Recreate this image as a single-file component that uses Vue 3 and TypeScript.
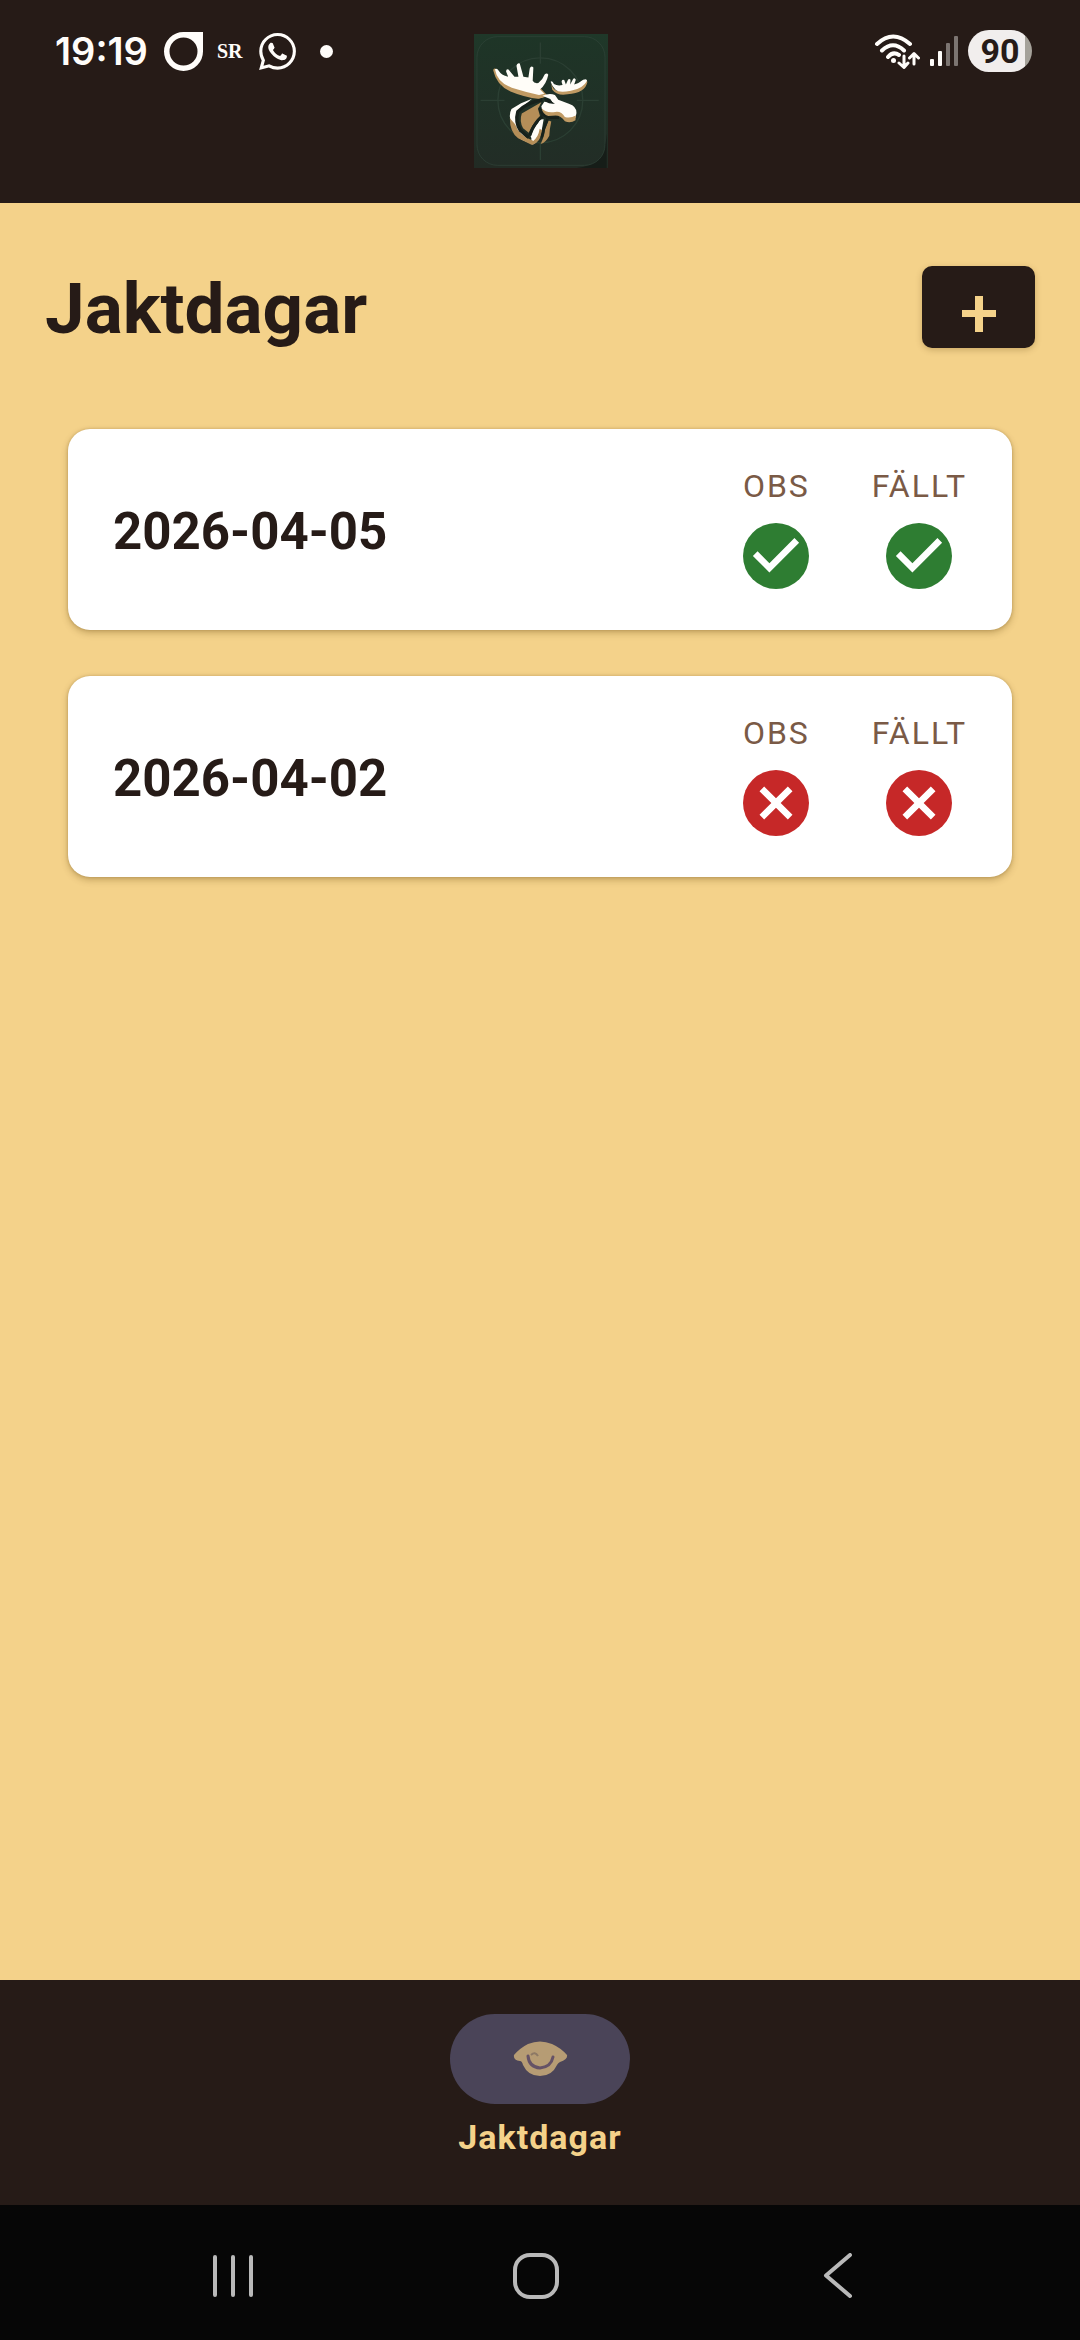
<script setup lang="ts">
interface HuntDay {
  date: string
  observed: boolean
  felled: boolean
}

const days: HuntDay[] = [
  { date: '2026-04-05', observed: true, felled: true },
  { date: '2026-04-02', observed: false, felled: false },
]

const statusesOf = (day: HuntDay) => [
  { label: 'OBS', done: day.observed },
  { label: 'FÄLLT', done: day.felled },
]
</script>

<template>
  <div class="app">
    <header class="topbar">
      <div class="status status-left">
        <span class="clock">19:19</span>
        <svg class="ic-ring" viewBox="0 0 39 39" aria-hidden="true">
          <path fill-rule="evenodd" d="M39 0V19.5A19.5 19.5 0 1 1 19.5 0ZM19.5 5.5A14 14 0 1 0 19.5 33.500A14 14 0 1 0 19.5 5.500Z" />
        </svg>
        <span class="sr">SR</span>
        <svg class="ic-chat" viewBox="0 0 24 24" aria-hidden="true">
          <path d="M17.472 14.382c-.297-.149-1.758-.867-2.030-.967-.273-.099-.471-.148-.670.150-.197.297-.767.966-.940 1.164-.173.199-.347.223-.644.075-.297-.150-1.255-.463-2.390-1.475-.883-.788-1.480-1.761-1.653-2.059-.173-.297-.018-.458.130-.606.134-.133.298-.347.446-.520.149-.174.198-.298.298-.497.099-.198.050-.371-.025-.520-.075-.149-.669-1.612-.916-2.207-.242-.579-.487-.500-.669-.510-.173-.008-.371-.010-.570-.010-.198 0-.520.074-.792.372-.272.297-1.040 1.016-1.040 2.479 0 1.462 1.065 2.875 1.213 3.074.149.198 2.096 3.200 5.077 4.487.709.306 1.262.489 1.694.625.712.227 1.360.195 1.871.118.571-.085 1.758-.719 2.006-1.413.248-.694.248-1.289.173-1.413-.074-.124-.272-.198-.570-.347m-5.421 7.403h-.004a9.870 9.870 0 01-5.031-1.378l-.361-.214-3.741.982.998-3.648-.235-.374a9.860 9.860 0 01-1.510-5.260c.001-5.450 4.436-9.884 9.888-9.884 2.640 0 5.122 1.030 6.988 2.898a9.825 9.825 0 012.893 6.994c-.003 5.450-4.437 9.884-9.885 9.884m8.413-18.297A11.815 11.815 0 0012.050 0C5.495 0 .160 5.335.157 11.892c0 2.096.547 4.142 1.588 5.945L.057 24l6.305-1.654a11.882 11.882 0 005.683 1.448h.005c6.554 0 11.890-5.335 11.893-11.893a11.821 11.821 0 00-3.480-8.413z" />
        </svg>
        <span class="dot"></span>
      </div>

      <svg class="logo" viewBox="40 40 404 404" role="img" aria-label="Älg">
        <defs>
          <linearGradient id="tile" x1="0" y1="0" x2="0" y2="1">
            <stop offset="0" stop-color="#1f3829" />
            <stop offset="1" stop-color="#222b24" />
          </linearGradient>
          <linearGradient id="glow" x1="0" y1="0" x2="0" y2="1">
            <stop offset="0" stop-color="#1e3527" />
            <stop offset="1" stop-color="#222d26" />
          </linearGradient>
        </defs>
        <rect x="40" y="40" width="404" height="404" fill="url(#tile)" />
        <path d="M350 444Q436 436 440 340V444Z" fill="#161d18" />
        <rect x="49" y="48" width="386" height="388" rx="62" fill="url(#glow)" stroke="#30443a" stroke-width="2" />
        <g fill="none" stroke="#2b3f33" stroke-width="4">
          <circle cx="240" cy="240" r="128" />
          <path d="M240 66V130M240 368V420M60 240H132M350 240H416" />
        </g>
        <g stroke-linejoin="round">
          <path fill="#c09a63" d="M98 150Q98 142 106 145Q112 162 140 172L200 195L242 205L262 226L238 236Q190 230 150 213Q108 195 98 150ZM272 188Q278 212 296 212Q350 210 375 178L382 184Q376 218 322 222Q292 228 276 208Z" />
          <path fill="#fffdf8" d="M103 146Q110 142 114 150Q122 164 143 169L137 154Q136 145 144 147L162 169L174 169L168 136Q170 126 178 129L189 169L204 171L208 144Q212 134 219 141L217 181Q221 190 234 188Q247 178 253 162Q260 155 264 163Q258 192 239 207L252 220L236 224Q195 215 154 202Q110 186 103 146Z" />
          <path fill="#fffdf8" d="M271 184Q276 179 281 191Q292 198 307 194L304 184Q305 175 312 179L317 192L322 181Q325 172 331 178L330 192L338 177Q343 169 347 178L342 192Q358 188 369 178Q380 173 381 181Q368 206 332 211Q296 218 286 208Q275 197 271 184Z" />
          <path fill="#fffdf8" d="M215 235L182 249L153 266Q143 285 153 308Q163 344 184 359L218 373Q238 362 243 337L250 297L238 298Q231 325 215 346L212 363Q186 348 172 321Q161 288 174 270Z" />
          <path fill="#b58e58" d="M243 246L184 280Q176 304 188 324L205 338L216 316L239 287L233 266ZM148 294Q148 336 173 354L215 375Q240 368 246 331L238 326Q234 351 219 362Q176 347 164 312Z" />
          <path fill="#b58e58" d="M265 301L273 304Q268 325 267 347Q257 367 241 372Q253 346 254 329Z" />
          <path fill="#fffdf8" d="M242 297L218 328L211 350L218 362L230 346Z" />
          <g fill="none" stroke="#17211b">
            <path stroke-width="10" d="M246 238Q198 248 172 274Q163 306 180 331L205 352" />
            <path stroke-width="9" d="M246 288Q222 306 208 346" />
            <path stroke-width="8" d="M262 296Q250 320 244 352" />
            <path stroke-width="8" d="M238 262Q240 284 266 292L296 292" />
          </g>
          <path fill="#fffdf8" d="M246 226Q268 217 284 224L294 238L326 250Q350 258 349 278L346 292Q334 304 316 301L302 285L266 283Q244 276 243 258L252 244L278 249L270 236Z" />
          <path fill="#c09a63" d="M244 264Q258 280 285 275Q303 272 314 290Q330 295 347 286L346 300Q331 310 314 303Q302 286 286 286L264 287Q248 284 244 264Z" />
          <path fill="#17211b" d="M250 235Q264 230 276 245L284 250Q266 252 258 244Z" />
        </g>
      </svg>

      <div class="status status-right">
        <svg class="ic-wifi" viewBox="0 0 46 36" fill="none" stroke-linecap="round" aria-hidden="true">
          <g stroke-width="4">
            <path d="M3 11Q19 -4 36 11M8 17.500Q19 7 30 17.500M14 24Q19 18 25 22" />
          </g>
          <circle class="solid" cx="19.500" cy="27.500" r="2.500" />
          <path stroke-width="3" stroke-linejoin="round" d="M30 23V34M25 30L30 34.500L34 30M40 31V21M35.500 25L40 20.500L44.500 25" />
        </svg>
        <svg class="ic-signal" viewBox="0 0 28 30" aria-hidden="true">
          <rect x="0" y="23" width="4" height="7" rx="1" />
          <rect x="8" y="15" width="4" height="15" rx="1" />
          <rect class="weak" x="16" y="7" width="4" height="23" rx="1" />
          <rect class="weak" x="24" y="0" width="4" height="30" rx="1" />
        </svg>
        <span class="battery">90</span>
      </div>
    </header>

    <main class="content">
      <div class="heading">
        <h1>Jaktdagar</h1>
        <button class="add" type="button" aria-label="Lägg till jaktdag">
          <svg viewBox="0 0 34 36" aria-hidden="true"><path d="M13 0h8v14h13v7H21v15h-8V21H0v-7h13z" /></svg>
        </button>
      </div>

      <ul class="days">
        <li v-for="day in days" :key="day.date" class="card">
          <time class="date" :datetime="day.date">{{ day.date }}</time>
          <div class="marks">
            <div v-for="s in statusesOf(day)" :key="s.label" class="mark">
              <span class="mark-label">{{ s.label }}</span>
              <svg class="mark-icon" :class="s.done ? 'yes' : 'no'" viewBox="2 2 20 20" role="img" :aria-label="s.done ? 'Ja' : 'Nej'">
                <circle cx="12" cy="12" r="10" />
                <path v-if="s.done" d="M10 17l-5-5 1.410-1.410L10 14.170l7.590-7.590L19 8z" />
                <path v-else d="M17 15.590L15.590 17 12 13.410 8.410 17 7 15.590 10.590 12 7 8.410 8.410 7 12 10.590 15.590 7 17 8.410 13.410 12z" />
              </svg>
            </div>
          </div>
        </li>
      </ul>
    </main>

    <nav class="tabs" aria-label="Huvudmeny">
      <a class="tab" href="#jaktdagar" aria-current="page">
        <span class="pill">
          <svg viewBox="0 0 55 36" aria-hidden="true">
            <path fill="#b69c74" d="M1 14Q7 7 15 3Q27 -2 39 3Q48 7 54 14Q55 18 47 21Q45 22 44 24Q39 35 27 35Q15 35 10 24Q9 20 7 20Q0 19 1 14Z" />
            <path fill="none" stroke="#655266" stroke-width="3" stroke-linecap="round" d="M15 15Q16 26 27 27Q38 26 40 16" />
            <path fill="none" stroke="#8d7965" stroke-width="2" d="M18 14Q22 10 25 15" />
          </svg>
        </span>
        <span class="tab-label">Jaktdagar</span>
      </a>
    </nav>

    <footer class="sysnav">
      <button type="button" aria-label="Senaste appar">
        <svg viewBox="0 0 46 46" aria-hidden="true"><path d="M6 4V42M24 4V42M42 4V42" /></svg>
      </button>
      <button type="button" aria-label="Hem">
        <svg viewBox="0 0 46 46" aria-hidden="true"><rect x="2" y="2" width="42" height="42" rx="15" /></svg>
      </button>
      <button type="button" aria-label="Tillbaka">
        <svg viewBox="0 0 46 46" aria-hidden="true"><path d="M34 2L10 22.500L34 43" /></svg>
      </button>
    </footer>
  </div>
</template>

<style>
body {
  margin: 0;
  background: #f4d28a;
}
</style>

<style scoped>
.app {
  display: flex;
  flex-direction: column;
  min-height: 100vh;
  background: #f4d28a;
  color: #261b17;
  font-family: Roboto, "Liberation Sans", sans-serif;
}

.topbar {
  display: grid;
  grid-template-columns: 1fr auto 1fr;
  align-items: start;
  box-sizing: border-box;
  padding: 30px 48px 35px 50px;
  background: #261b17;
  color: #fffdfa;
}
.status {
  display: flex;
  align-items: center;
  height: 42px;
}
.status svg {
  fill: currentColor;
}
.status-left {
  padding-left: 5px;
}
.status-right {
  justify-content: flex-end;
  gap: 10px;
}
.clock {
  font: 600 38px/42px Inter, sans-serif;
}
.ic-ring {
  width: 39px;
  height: 39px;
  margin-left: 16px;
}
.sr {
  margin-left: 14px;
  font: 700 20px/24px "Liberation Serif", serif;
}
.ic-chat {
  width: 37px;
  height: 37px;
  margin-left: 17px;
}
.dot {
  width: 13px;
  height: 13px;
  margin-left: 24px;
  border-radius: 50%;
  background: currentColor;
}
.logo {
  width: 134px;
  height: 134px;
  margin-top: 4px;
}
.status .ic-wifi {
  width: 46px;
  height: 36px;
  fill: none;
  stroke: currentColor;
}
.status .solid {
  fill: currentColor;
  stroke: none;
}
.ic-signal {
  width: 28px;
  height: 30px;
}
.weak {
  opacity: 0.4;
}
.battery {
  width: 64px;
  border-radius: 21px;
  background: linear-gradient(to right, #f1eeed 57px, #a5a29a 57px);
  color: #261b17;
  font-size: 34px;
  line-height: 42px;
  font-weight: 700;
  text-align: center;
}

.content {
  flex: 1;
}
.heading {
  display: flex;
  justify-content: space-between;
  align-items: center;
  padding: 60px 45px 0;
}
h1 {
  margin: 0;
  padding-top: 4px;
  font-size: 71px;
  line-height: 84px;
  font-weight: 700;
}
.add {
  display: flex;
  justify-content: center;
  align-items: center;
  width: 113px;
  height: 82px;
  padding: 14px 0 0;
  border: 0;
  border-radius: 10px;
  background: #261b17;
  box-shadow: 0 2px 6px rgba(80, 50, 0, 0.25);
}
.add svg {
  width: 34px;
  height: 36px;
  fill: #f4d28a;
}
.days {
  display: flex;
  flex-direction: column;
  gap: 46px;
  margin: 78px 68px 0;
  padding: 0;
  list-style: none;
}
.card {
  display: flex;
  justify-content: space-between;
  align-items: center;
  padding: 38px 45px 41px;
  border-radius: 22px;
  background: #fff;
  box-shadow: 0 3px 7px rgba(90, 60, 0, 0.3), 0 0 3px rgba(90, 60, 0, 0.25);
}
.date {
  padding-top: 8px;
  font-size: 51px;
  line-height: 60px;
  font-weight: 700;
}
.marks {
  display: flex;
  gap: 62px;
}
.mark {
  display: flex;
  flex-direction: column;
  align-items: center;
  gap: 18px;
}
.mark-label {
  color: #7a5a46;
  font-size: 32px;
  line-height: 38px;
  letter-spacing: 2px;
}
.mark-icon {
  width: 66px;
  height: 66px;
}
.mark-icon path {
  fill: #fff;
}
.yes {
  fill: #2e7d32;
}
.no {
  fill: #c62828;
}

.tabs {
  display: flex;
  justify-content: center;
  padding: 34px 0 48px;
  background: #261b17;
}
.tab {
  display: flex;
  flex-direction: column;
  align-items: center;
  gap: 13px;
  color: #f4d28a;
  text-decoration: none;
}
.pill {
  display: flex;
  justify-content: center;
  align-items: center;
  width: 180px;
  height: 90px;
  border-radius: 45px;
  background: #4a4458;
}
.pill svg {
  width: 55px;
  height: 36px;
}
.tab-label {
  font-size: 34px;
  line-height: 40px;
  font-weight: 700;
  letter-spacing: 1px;
}

.sysnav {
  display: flex;
  justify-content: space-between;
  align-items: center;
  padding: 48px 218px 41px 209px;
  background: #060606;
}
.sysnav button {
  display: flex;
  padding: 0;
  border: 0;
  background: none;
}
.sysnav svg {
  width: 46px;
  height: 46px;
  fill: none;
  stroke: #b9b9b9;
  stroke-width: 4;
  stroke-linecap: round;
  stroke-linejoin: round;
}
</style>
